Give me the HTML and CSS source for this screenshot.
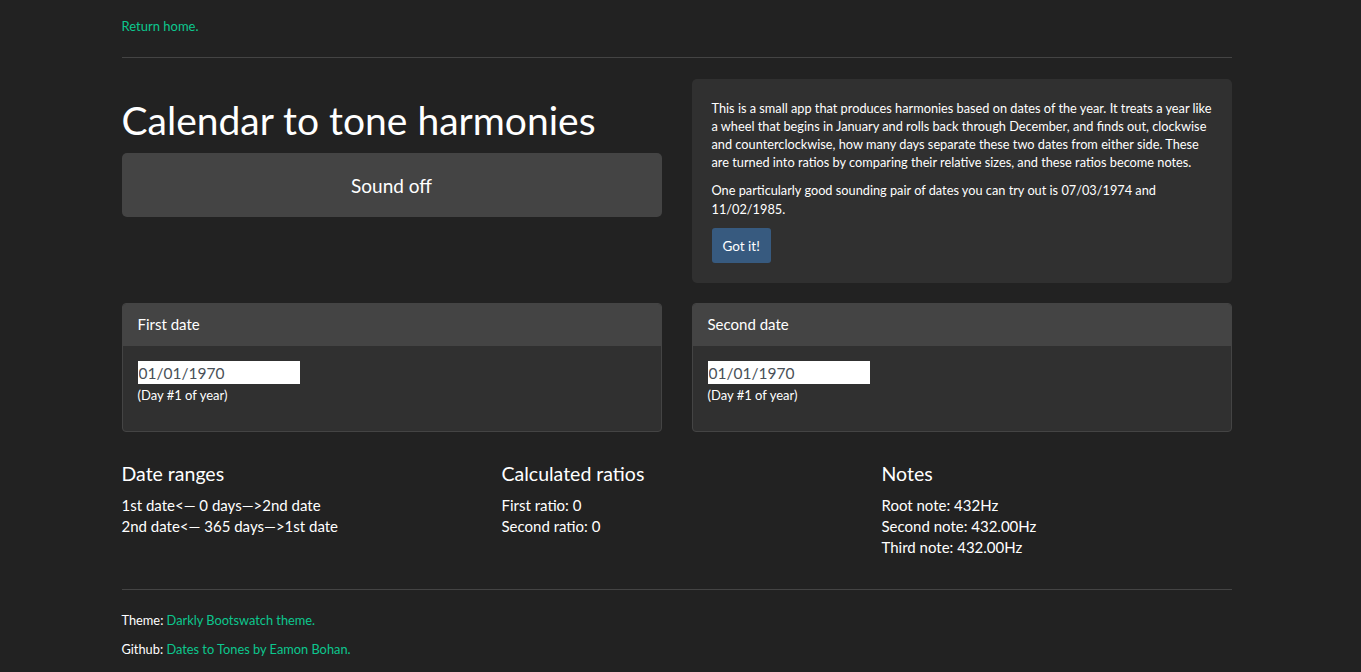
FILE: index.html
```html
<!DOCTYPE html>
<html lang="en">
<head>
<meta charset="utf-8">
<title>Calendar to tone harmonies</title>
<link rel="stylesheet" href="styles.css">
</head>
<body>
<div class="container">
  <div class="topbar"><a href="#">Return home.</a></div>
  <hr class="rule">
  <div class="row intro">
    <div class="col">
      <h1 class="title">Calendar to tone harmonies</h1>
      <button class="btn-sound">Sound off</button>
    </div>
    <div class="col">
      <div class="jumbo">
        <p>This is a small app that produces harmonies based on dates of the year. It treats a year like a wheel that begins in January and rolls back through December, and finds out, clockwise and counterclockwise, how many days separate these two dates from either side. These are turned into ratios by comparing their relative sizes, and these ratios become notes.</p>
        <p>One particularly good sounding pair of dates you can try out is 07/03/1974 and 11/02/1985.</p>
        <button class="btn-got">Got it!</button>
      </div>
    </div>
  </div>
  <div class="row dates">
    <div class="col">
      <div class="card">
        <div class="card-header">First date</div>
        <div class="card-body">
          <input class="date-input" type="text" value="01/01/1970">
          <div class="day-note">(Day #1 of year)</div>
        </div>
      </div>
    </div>
    <div class="col">
      <div class="card">
        <div class="card-header">Second date</div>
        <div class="card-body">
          <input class="date-input" type="text" value="01/01/1970">
          <div class="day-note">(Day #1 of year)</div>
        </div>
      </div>
    </div>
  </div>
  <div class="results">
    <div class="col3">
      <h4 class="res-title">Date ranges</h4>
      <div class="res-line">1st date&lt;— 0 days—&gt;2nd date</div>
      <div class="res-line">2nd date&lt;— 365 days—&gt;1st date</div>
    </div>
    <div class="col3">
      <h4 class="res-title">Calculated ratios</h4>
      <div class="res-line">First ratio: 0</div>
      <div class="res-line">Second ratio: 0</div>
    </div>
    <div class="col3">
      <h4 class="res-title">Notes</h4>
      <div class="res-line">Root note: 432Hz</div>
      <div class="res-line">Second note: 432.00Hz</div>
      <div class="res-line">Third note: 432.00Hz</div>
    </div>
  </div>
  <hr class="rule bottom-rule">
  <footer class="footer">
    <p>Theme: <a href="#">Darkly Bootswatch theme.</a></p>
    <p>Github: <a href="#">Dates to Tones by Eamon Bohan.</a></p>
  </footer>
</div>
</body>
</html>
```

FILE: styles.css
```css
* { box-sizing: border-box; }
html, body { margin: 0; padding: 0; }
body {
  background: #222222;
  color: #ffffff;
  font-family: Lato, "Noto Sans", sans-serif;
  font-size: 13px;
  line-height: 18px;
  padding-right: 8px;
}
a { color: #0cc78e; text-decoration: none; }
.container {
  width: 1110px;
  margin: 0 auto;
}
.topbar { padding-top: 17px; height: 35px; }
.rule {
  border: 0;
  border-top: 1px solid #444444;
  margin: 22px 0 0 0;
  height: 0;
}
.row { display: flex; gap: 30px; }
.col { flex: 1 1 0; min-width: 0; }
.intro { margin-top: 21px; }
.title {
  font-size: 39px;
  font-weight: 400;
  line-height: 48px;
  margin: 17px 0 9px 0;
}
.btn-sound {
  display: block;
  width: 100%;
  height: 64px;
  background: #444444;
  border: 0;
  border-radius: 5px;
  color: #ffffff;
  font-family: Lato, sans-serif;
  font-size: 19px;
}
.jumbo {
  background: #303030;
  border-radius: 5px;
  padding: 20px 20px 19px 20px;
  height: 204px;
}
.jumbo p { margin: 0 0 10px 0; font-size: 12.75px; }
.jumbo p + p { line-height: 19px; margin-top: 1px; margin-bottom: 9px; }
.btn-got {
  display: block;
  background: #375a7f;
  border: 0;
  border-radius: 3px;
  color: #ffffff;
  font-family: Lato, sans-serif;
  font-size: 13.5px;
  padding: 0 11px;
  height: 35px;
}
.dates { margin-top: 20px; }
.card {
  background: #303030;
  border: 1px solid #444444;
  border-radius: 4px;
  overflow: hidden;
  height: 129px;
}
.card-header {
  background: #444444;
  padding: 0 15px;
  height: 42px;
  line-height: 40px;
  font-size: 15px;
}
.card-body { padding: 15px 15px; }
.date-input {
  display: block;
  width: 162px;
  height: 23px;
  border: 0;
  padding: 0 1px;
  background: #ffffff;
  color: #495057;
  font-family: Lato, sans-serif;
  font-size: 15.5px;
}
.day-note { font-size: 13px; line-height: 22px; }
.results {
  display: flex;
  margin-top: 30px;
  margin-right: -30px;
}
.col3 { flex: 0 0 380px; }
.res-title {
  font-size: 19.5px;
  font-weight: 400;
  line-height: 24px;
  margin: 0 0 9px 0;
}
.res-line { font-size: 15px; line-height: 21px; }
.bottom-rule { margin-top: 31px; }
.footer { padding-top: 21px; font-size: 12.8px; }
.footer p { margin: 0 0 11px 0; }
```
